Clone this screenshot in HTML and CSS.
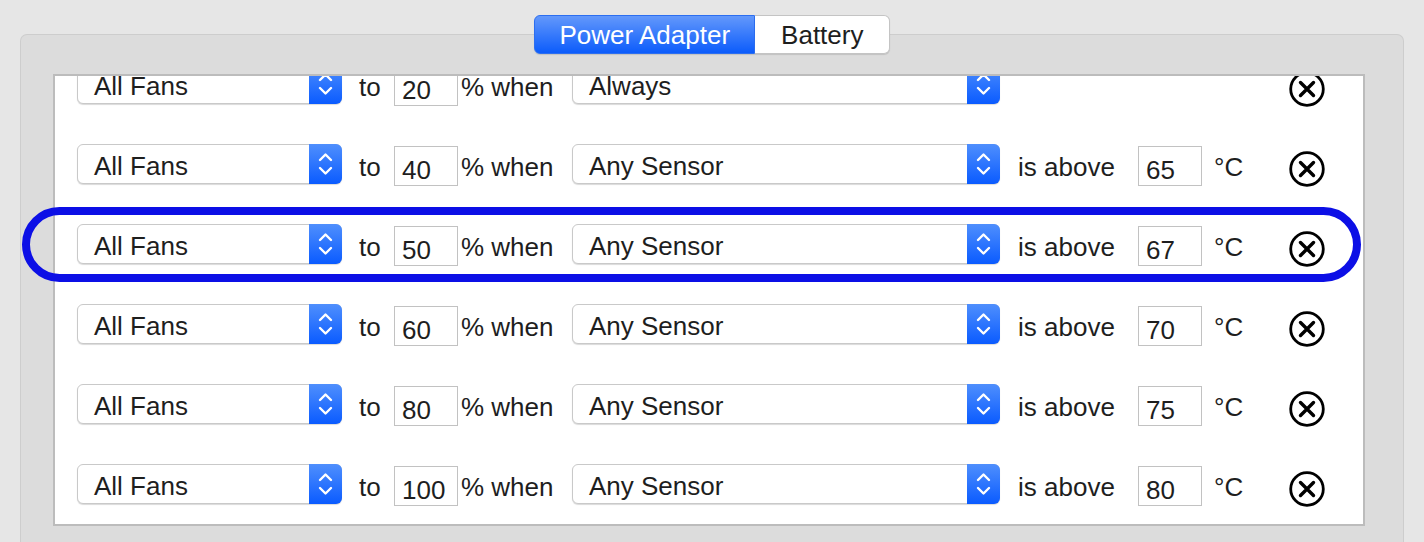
FILE: index.html
```html
<!DOCTYPE html>
<html lang="en">
<head>
  <meta charset="UTF-8" />
  <meta name="viewport" content="width=device-width, initial-scale=1" />
  <title>Fan Control</title>
  <link rel="stylesheet" href="styles.css">
</head>
<body>
  <div class="tabs">
    <div class="tab active">Power Adapter</div>
    <div class="tab">Battery</div>
  </div>

  <div class="panel">
    <div class="list">
      <div class="rows" id="rows"></div>
    </div>
    <!-- highlight drawn over the selected rule -->
    <div class="ring"></div>
  </div>

  <script>
    const rules = [
      { speed: 20, sensor: 'Always' },
      { speed: 40, sensor: 'Any Sensor', temp: 65 },
      { speed: 50, sensor: 'Any Sensor', temp: 67 },
      { speed: 60, sensor: 'Any Sensor', temp: 70 },
      { speed: 80, sensor: 'Any Sensor', temp: 75 },
      { speed: 100, sensor: 'Any Sensor', temp: 80 },
    ];

    const stepper = '<span class="stepper"><svg width="33" height="40" viewBox="0 0 33 40">' +
      '<path d="M11 16 L16.5 10.5 L22 16 M11 24 L16.5 29.5 L22 24" fill="none" stroke="#fff" stroke-width="2.4" stroke-linecap="round" stroke-linejoin="round"/>' +
      '</svg></span>';

    const removeIcon = '<svg class="remove" width="36" height="36" viewBox="0 0 36 36">' +
      '<circle cx="18" cy="18" r="16.3" fill="none" stroke="#000" stroke-width="2.8"/>' +
      '<path d="M11.5 11.5 L24.5 24.5 M24.5 11.5 L11.5 24.5" stroke="#000" stroke-width="3.4" stroke-linecap="round"/>' +
      '</svg>';

    const rowsDiv = document.getElementById('rows');
    rules.forEach(r => {
      const div = document.createElement('div');
      div.classList.add('row');
      let html = `<div class="select"><span class="value">All Fans</span>${stepper}</div>` +
        `<span class="label to">to</span>` +
        `<div class="field">${r.speed}</div>` +
        `<span class="label when">% when</span>` +
        `<div class="select"><span class="value">${r.sensor}</span>${stepper}</div>`;
      if (r.temp) {
        html += `<span class="label above">is above</span>` +
          `<div class="field">${r.temp}</div>` +
          `<span class="label unit">°C</span>`;
      }
      html += removeIcon;
      div.innerHTML = html;
      rowsDiv.appendChild(div);
    });
  </script>
</body>
</html>
```

FILE: styles.css
```css
body {
  margin: 0;
  background: #e6e6e6;
  font-family: "Liberation Sans", Arial, sans-serif;
  font-size: 26px;
  color: #1e1e1e;
  overflow: hidden;
}
.tabs {
  position: relative;
  z-index: 2;
  display: flex;
  justify-content: center;
  margin-top: 15px;
}
.tab {
  height: 37px;
  line-height: 38px;
  padding: 0 26px;
  background: #fff;
  border: 1px solid #c4c4c4;
  border-left: none;
  border-radius: 0 6px 6px 0;
  box-shadow: 0 1px 1px rgba(0,0,0,0.12);
  color: #1e1e1e;
}
.tab.active {
  padding: 0 24px 0 25px;
  background: linear-gradient(#6398fb, #0c5cfb);
  border: 1px solid #2c6ef0;
  border-radius: 6px 0 0 6px;
  color: #fff;
}
.panel {
  position: relative;
  margin: -20px 20px 0 20px;
  height: 508px;
  background: #dcdcdc;
  border: 1px solid #cdcdcd;
  border-bottom: none;
  border-radius: 7px 7px 0 0;
  padding: 39px 38px 0 32px;
  box-sizing: border-box;
}
.list {
  height: 452px;
  box-sizing: border-box;
  background: #fff;
  border: 2px solid #bcbcbc;
  overflow: hidden;
}
.rows {
  margin-top: -32px;
}
.row {
  display: grid;
  grid-template-columns: 265px 52px 64px 114px 428px 138px 64px 87px 35px;
  align-items: center;
  height: 80px;
  padding-left: 22px;
}
.select {
  position: relative;
  height: 38px;
  background: #fff;
  border: 1px solid #c9c9c9;
  border-radius: 6px;
  box-shadow: 0 1px 1px rgba(0,0,0,0.15);
  display: flex;
  align-items: center;
}
.select .value {
  padding-left: 16px;
  flex: 1;
  margin-top: 5px;
}
.stepper {
  width: 33px;
  height: 40px;
  margin: -1px -1px -1px 0;
  background: linear-gradient(#4f8ffd, #0a5bff);
  border-radius: 0 6px 6px 0;
}
.stepper svg {
  display: block;
}
.label {
  white-space: nowrap;
  margin-top: 7px;
}
.to {
  padding-left: 17px;
}
.when {
  padding-left: 3px;
}
.above {
  padding-left: 18px;
}
.unit {
  padding-left: 12px;
}
.field {
  height: 38px;
  line-height: 46px;
  margin-top: 4px;
  border: 1px solid #c2c2c2;
  padding-left: 7px;
  color: #1e1e1e;
}
.remove {
  grid-column: 9;
  margin-top: 9px;
  display: block;
}
.ring {
  position: absolute;
  left: 1px;
  top: 172px;
  width: 1339px;
  height: 75px;
  box-sizing: border-box;
  border: 8px solid #0c0fe6;
  border-radius: 38px;
  pointer-events: none;
}
```
